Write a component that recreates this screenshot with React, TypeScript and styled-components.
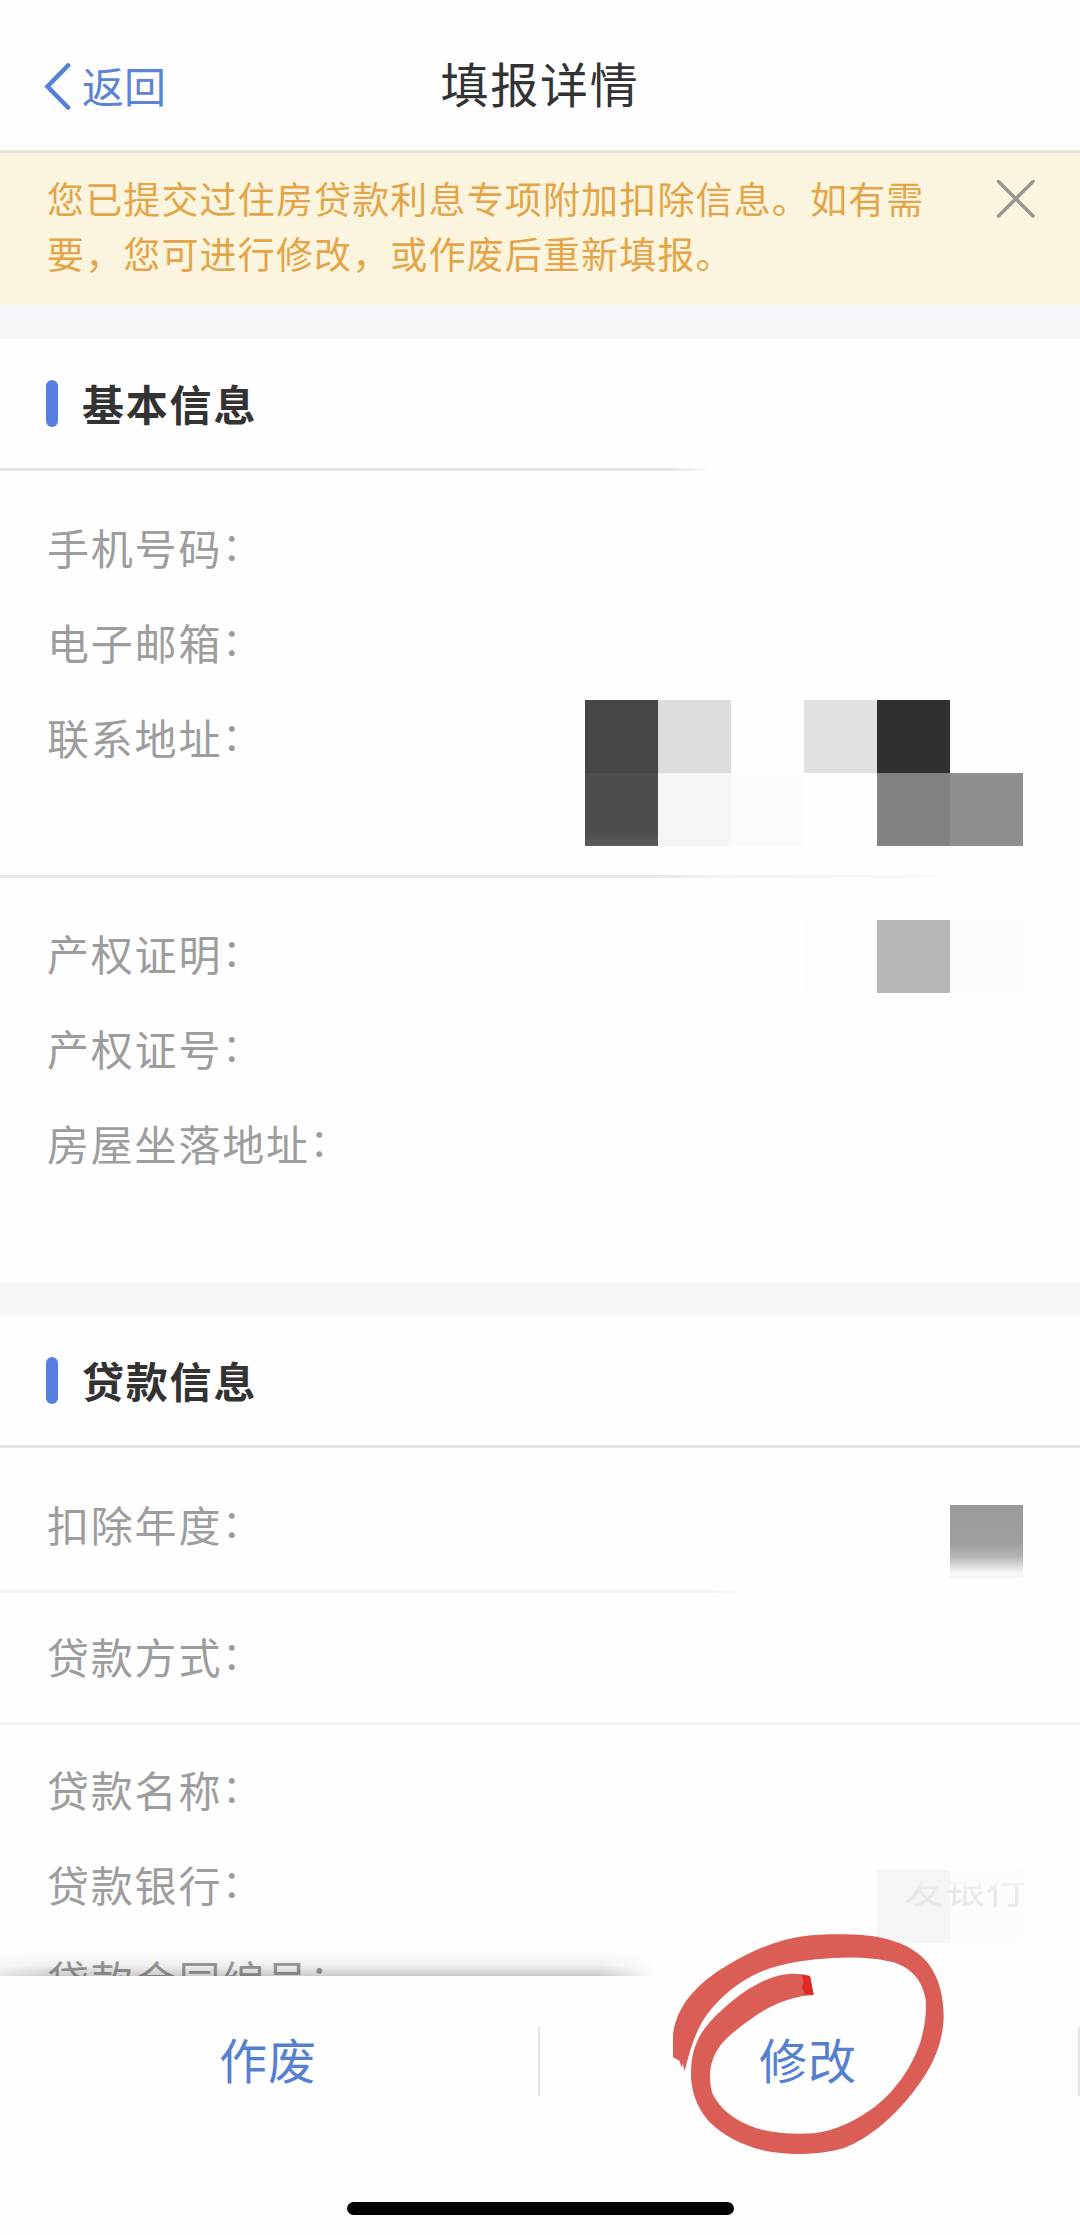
import React from 'react';
import styled, { createGlobalStyle } from 'styled-components';

const GlobalStyle = createGlobalStyle`
  * { box-sizing: border-box; }
  body {
    margin: 0;
    background: #fefefe;
    font-family: 'Noto Sans CJK SC', 'Noto Sans', sans-serif;
  }
`;

const Screen = styled.div`
  position: relative;
  width: 1080px;
  height: 2235px;
  display: flex;
  flex-direction: column;
  overflow: hidden;
  background: #fefefe;
`;

const Header = styled.header`
  flex: none;
  height: 153px;
  padding: 23px 44px 0;
  display: grid;
  grid-template-columns: 1fr auto 1fr;
  align-items: center;
  border-bottom: 3px solid #e6e4e3;
`;

const Back = styled.button`
  display: flex;
  align-items: center;
  gap: 10px;
  padding: 0;
  border: 0;
  background: none;
  color: #5b84d4;
  font: inherit;
  font-size: 42px;
  line-height: 60px;
`;

const BackLabel = styled.span`
  padding-bottom: 4px;
`;

const Title = styled.h1`
  margin: 0;
  padding-bottom: 9px;
  color: #333;
  font-size: 48px;
  font-weight: 400;
  letter-spacing: 1.8px;
  line-height: 70px;
`;

const Notice = styled.div`
  flex: none;
  height: 152px;
  padding: 18px 44px 0 47px;
  display: flex;
  justify-content: space-between;
  align-items: flex-start;
  background: #fbf5df;
`;

const NoticeText = styled.p`
  margin: 0;
  width: 890px;
  color: #e3a548;
  font-size: 37px;
  letter-spacing: 1.15px;
  line-height: 55px;
`;

const Close = styled.svg`
  flex: none;
  margin-top: 8px;
`;

const Gap = styled.div`
  flex: none;
  height: 34px;
  background: #f4f6fa;
`;

const SectionTitle = styled.h2<{ $fade?: boolean }>`
  flex: none;
  margin: 0;
  height: 132px;
  padding: 0 46px 4px;
  display: flex;
  align-items: center;
  gap: 24px;
  color: #333;
  font-size: 42px;
  font-weight: 700;
  letter-spacing: 1.8px;
  background: ${(p) =>
      p.$fade
        ? 'linear-gradient(to right, #e4e4e4 670px, rgba(228,228,228,0) 710px)'
        : 'linear-gradient(#e4e4e4, #e4e4e4)'}
    0 100% / 100% 3px no-repeat;
`;

const SectionName = styled.span`
  padding-bottom: 2px;
`;

const Marker = styled.span`
  width: 12px;
  height: 47px;
  border-radius: 6px;
  background: #5580e2;
`;

const Group = styled.div<{ $height: number; $top: number; $line?: string }>`
  flex: none;
  height: ${(p) => p.$height}px;
  padding: ${(p) => p.$top}px 57px 0 47px;
  background: ${(p) => p.$line ?? 'none'} 0 100% / 100% 3px no-repeat;
`;

const Row = styled.div`
  height: 95px;
  display: flex;
  justify-content: space-between;
  align-items: flex-start;
`;

const LabelText = styled.span`
  color: #9d9d9d;
  font-size: 42px;
  letter-spacing: 1.8px;
  line-height: 95px;
`;

const Colon = styled.span`
  font-size: 38px;
  line-height: 1;
  vertical-align: 5px;
`;

const Mosaic = styled.div<{ $cols: number; $top: number }>`
  display: grid;
  grid-template-columns: repeat(${(p) => p.$cols}, 73px);
  grid-auto-rows: 73px;
  margin-top: ${(p) => p.$top}px;
`;

const Tile = styled.span<{ $fill: string }>`
  background: ${(p) => p.$fill};
`;

const BankTiles = styled(Mosaic)`
  position: relative;
`;

const Residue = styled.span`
  position: absolute;
  right: -4px;
  top: -14px;
  color: #e8e8e8;
  font-size: 40px;
  line-height: 60px;
  letter-spacing: 1px;
  white-space: nowrap;
  mask-image: linear-gradient(to bottom, transparent 38%, #000 58%);
`;

const Footer = styled.footer`
  position: absolute;
  left: 0;
  right: 0;
  bottom: 0;
  height: 259px;
  display: flex;
  flex-direction: column;
  align-items: center;
  justify-content: space-between;
  padding: 51px 0 20px;
  background: #fefefe;
`;

const FooterShadow = styled.div`
  position: absolute;
  left: 0;
  bottom: 259px;
  width: 655px;
  height: 26px;
  background: linear-gradient(to bottom, rgba(0, 0, 0, 0), rgba(0, 0, 0, 0.06) 60%, rgba(0, 0, 0, 0.2));
  mask-image: linear-gradient(to right, rgba(0, 0, 0, 0.5), #000 50px, #000 600px, transparent);
`;

const Actions = styled.div`
  width: 100%;
  display: grid;
  grid-template-columns: 1fr 1fr;
`;

const Action = styled.button`
  height: 69px;
  padding: 0 2px 6px 0;
  border: 0;
  border-right: 2px solid #e4e4e4;
  background: none;
  color: #5580d0;
  font: inherit;
  font-size: 48px;
  letter-spacing: 1px;
  line-height: 63px;
`;

const HomeBar = styled.div`
  width: 387px;
  height: 13px;
  border-radius: 7px;
  background: #000;
`;

const Scribble = styled.svg`
  position: absolute;
  left: 640px;
  top: 1900px;
`;

const ADDRESS_TILES = [
  '#464646', '#dcdcdc', 'transparent', '#e1e1e1', '#303030', 'transparent',
  'linear-gradient(#4d4d4d 80%, #5c5c5c)', '#f5f5f5', '#fbfbfb', 'transparent', '#828282', '#8f8f8f',
];

const LINE = 'linear-gradient(to right, #e6e6e6 650px, #f4f4f4 720px, #fcfcfc 1020px)';
const SHORT_LINE = 'linear-gradient(to right, #f3f3f3 700px, rgba(243,243,243,0) 750px)';
const THIN_LINE = 'linear-gradient(#f5f5f5, #f5f5f5)';

function Label({ text }: { text: string }) {
  return (
    <LabelText>
      {text}
      <Colon>：</Colon>
    </LabelText>
  );
}

export default function App() {
  return (
    <>
      <GlobalStyle />
      <Screen>
        <Header>
          <Back>
            <svg
              width="28"
              height="48"
              viewBox="0 0 28 48"
              fill="none"
              stroke="#5580d8"
              strokeWidth="4.6"
              strokeLinecap="round"
            >
              <path d="M24 2.5 3.5 23.5 24 44.5" />
            </svg>
            <BackLabel>返回</BackLabel>
          </Back>
          <Title>填报详情</Title>
        </Header>
        <Notice>
          <NoticeText>您已提交过住房贷款利息专项附加扣除信息。如有需要，您可进行修改，或作废后重新填报。</NoticeText>
          <Close width="40" height="40" viewBox="0 0 40 40" stroke="#989690" strokeWidth="3.4" strokeLinecap="round">
            <path d="M2.5 2.5 37 37M37 2.5 2.5 37" />
          </Close>
        </Notice>
        <Gap />

        <SectionTitle $fade>
          <Marker />
          <SectionName>基本信息</SectionName>
        </SectionTitle>
        <Group $height={407} $top={28} $line={LINE}>
          <Row><Label text="手机号码" /></Row>
          <Row><Label text="电子邮箱" /></Row>
          <Row>
            <Label text="联系地址" />
            <Mosaic $cols={6} $top={11}>
              {ADDRESS_TILES.map((fill, i) => (
                <Tile key={i} $fill={fill} />
              ))}
            </Mosaic>
          </Row>
        </Group>
        <Group $height={404} $top={27}>
          <Row>
            <Label text="产权证明" />
            <Mosaic $cols={3} $top={15}>
              <Tile $fill="#fdfdfd" />
              <Tile $fill="#b6b6b6" />
              <Tile $fill="#fcfcfc" />
            </Mosaic>
          </Row>
          <Row><Label text="产权证号" /></Row>
          <Row><Label text="房屋坐落地址" /></Row>
        </Group>
        <Gap />

        <SectionTitle>
          <Marker />
          <SectionName>贷款信息</SectionName>
        </SectionTitle>
        <Group $height={145} $top={28} $line={SHORT_LINE}>
          <Row>
            <Label text="扣除年度" />
            <Mosaic $cols={1} $top={29}>
              <Tile $fill="linear-gradient(#9a9a9a, #9f9f9f 52%, #b4b4b4 70%, #dcdcdc 84%, #fafafa 94%, #f4f4f4)" />
            </Mosaic>
          </Row>
        </Group>
        <Group $height={132} $top={15} $line={THIN_LINE}>
          <Row><Label text="贷款方式" /></Row>
        </Group>
        <Group $height={310} $top={16}>
          <Row><Label text="贷款名称" /></Row>
          <Row>
            <Label text="贷款银行" />
            <BankTiles $cols={2} $top={34}>
              <Tile $fill="#f5f5f5" />
              <Tile $fill="#fcfcfc" />
              <Residue>发银行</Residue>
            </BankTiles>
          </Row>
          <Row><Label text="贷款合同编号" /></Row>
        </Group>

        <FooterShadow />
        <Footer>
          <Actions>
            <Action>作废</Action>
            <Action>修改</Action>
          </Actions>
          <HomeBar />
        </Footer>

        <Scribble width="320" height="280" viewBox="0 0 960 840">
          <path
            fill="#da5d56"
            d="M99 472 99 405C108 320 170 250 260 197C340 150 420 115 500 107C570 101 650 101 700 109C780 122 835 150 868 195C897 235 911 290 911 350C909 430 880 495 830 562C770 645 690 715 610 745C540 765 470 766 390 755C320 742 250 710 205 662C165 615 148 560 154 495C160 430 185 385 240 335C300 280 360 240 420 226C450 219 480 219 510 228L521 285C470 287 410 305 350 345C300 380 260 410 238 440C210 480 203 530 217 580C240 630 290 665 350 685C400 700 460 704 520 700C590 692 650 660 705 620C770 570 815 500 840 430C855 380 860 340 857 300C850 250 820 205 760 187C710 173 640 170 580 174C500 178 430 190 370 212C300 240 240 290 200 345C165 395 150 450 134 513L128 492 124 502 119 483Z"
          />
          <path fill="#e02826" d="M486 224 510 229 521 284 494 283 486 262 490 245Z" />
        </Scribble>
      </Screen>
    </>
  );
}
